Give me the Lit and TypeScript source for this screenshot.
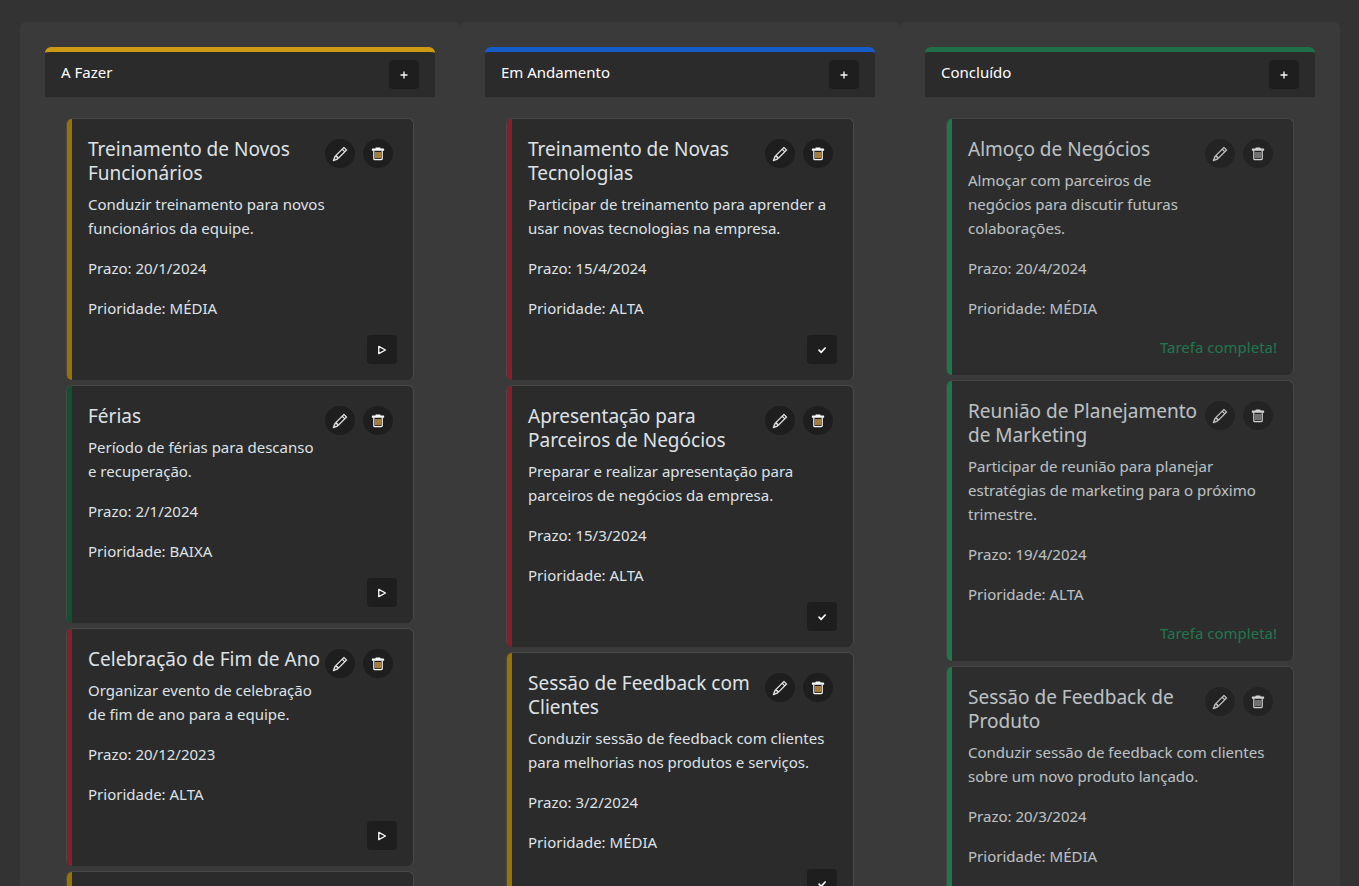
import { LitElement, html, css, svg, nothing } from "lit";
import { customElement, property } from "lit/decorators.js";

type Priority = "ALTA" | "MÉDIA" | "BAIXA";
type Stage = "todo" | "doing" | "done";

interface Task {
  title: string;
  text: string;
  due: string;
  priority: Priority;
}

interface Column {
  stage: Stage;
  name: string;
  tasks: Task[];
  pending?: Priority;
}

const COLUMNS: Column[] = [
  {
    stage: "todo",
    name: "A Fazer",
    tasks: [
      { title: "Treinamento de Novos Funcionários", text: "Conduzir treinamento para novos funcionários da equipe.", due: "20/1/2024", priority: "MÉDIA" },
      { title: "Férias", text: "Período de férias para descanso e recuperação.", due: "2/1/2024", priority: "BAIXA" },
      { title: "Celebração de Fim de Ano", text: "Organizar evento de celebração de fim de ano para a equipe.", due: "20/12/2023", priority: "ALTA" },
    ],
    pending: "MÉDIA",
  },
  {
    stage: "doing",
    name: "Em Andamento",
    tasks: [
      { title: "Treinamento de Novas Tecnologias", text: "Participar de treinamento para aprender a usar novas tecnologias na empresa.", due: "15/4/2024", priority: "ALTA" },
      { title: "Apresentação para Parceiros de Negócios", text: "Preparar e realizar apresentação para parceiros de negócios da empresa.", due: "15/3/2024", priority: "ALTA" },
      { title: "Sessão de Feedback com Clientes", text: "Conduzir sessão de feedback com clientes para melhorias nos produtos e serviços.", due: "3/2/2024", priority: "MÉDIA" },
    ],
  },
  {
    stage: "done",
    name: "Concluído",
    tasks: [
      { title: "Almoço de Negócios", text: "Almoçar com parceiros de negócios para discutir futuras colaborações.", due: "20/4/2024", priority: "MÉDIA" },
      { title: "Reunião de Planejamento de Marketing", text: "Participar de reunião para planejar estratégias de marketing para o próximo trimestre.", due: "19/4/2024", priority: "ALTA" },
      { title: "Sessão de Feedback de Produto", text: "Conduzir sessão de feedback com clientes sobre um novo produto lançado.", due: "20/3/2024", priority: "MÉDIA" },
    ],
  },
];

const GLYPHS = {
  plus: svg`<path d="M8 4v8M4 8h8" stroke="currentColor" stroke-width="1.500" fill="none"/>`,
  play: svg`<path d="M4.300 3.800v8.400L12 8z" stroke="currentColor" stroke-width="1.500" stroke-linejoin="round" fill="none"/>`,
  check: svg`<path d="M4.600 8.200l2.400 2.500 4.600-5" stroke="currentColor" stroke-width="1.900" stroke-linecap="round" stroke-linejoin="round" fill="none"/>`,
  pencil: svg`<path fill="currentColor" stroke="currentColor" stroke-width=".5" d="M12.146.146a.5.5 0 0 1 .708 0l3 3a.5.5 0 0 1 0 .708l-10 10a.5.5 0 0 1-.168.11l-5 2a.5.5 0 0 1-.65-.65l2-5a.5.5 0 0 1 .11-.168zM11.207 2.5 13.5 4.793 14.793 3.5 12.5 1.207zm1.586 3L10.5 3.207 4 9.707V10h.5a.5.5 0 0 1 .5.5v.5h.5a.5.5 0 0 1 .5.5v.5h.293zm-9.761 5.175-.106.106-1.528 3.821 3.821-1.528.106-.106A.5.5 0 0 1 5 12.5V12h-.5a.5.5 0 0 1-.5-.5V11h-.5a.5.5 0 0 1-.468-.325"/>`,
  trash: svg`<path fill="currentColor" d="M5.500.6h5l.5 1h3.400a.6.6 0 0 1 .6.6v1.400a.6.6 0 0 1-.6.6H1.600a.6.6 0 0 1-.6-.6V2.200a.6.6 0 0 1 .6-.6H5z"/><path class="slats" d="M5.700 5.600v7.200M8 5.600v7.200M10.300 5.600v7.200"/><path d="M3.200 4v9.300a1.200 1.200 0 0 0 1.200 1.200h7.200a1.200 1.200 0 0 0 1.200-1.200V4" fill="none" stroke="currentColor" stroke-width="1.400"/>`,
};

const icon = (name: keyof typeof GLYPHS) =>
  html`<svg viewBox="0 0 16 16" width="14" height="14" aria-hidden="true">${GLYPHS[name]}</svg>`;

const buttonStyles = css`
  button {
    display: inline-flex;
    align-items: center;
    justify-content: center;
    width: 30px;
    height: 29px;
    padding: 0;
    border: 0;
    border-radius: 4px;
    background: #1e1e1e;
    color: #f8f9fa;
    cursor: pointer;
  }
  button:hover {
    background: #171717;
  }
  svg {
    display: block;
    overflow: visible;
  }
`;

@customElement("task-card")
export class TaskCard extends LitElement {
  @property({ attribute: false }) task?: Task;
  @property() stage: Stage = "todo";
  @property() priority: Priority = "BAIXA";

  static styles = [
    buttonStyles,
    css`
      :host {
        display: block;
      }
      .card {
        border: 1px solid #494949;
        border-bottom: 0;
        border-radius: 6px;
        background: #2b2b2b;
        color: #dee2e6;
      }
      .body {
        min-height: 24px;
        padding: 16px;
        border-left: 5px solid;
        border-radius: 5px;
      }
      .high {
        border-left-color: #842029;
      }
      .medium {
        border-left-color: #997404;
      }
      .low {
        border-left-color: #0f5132;
      }
      .slats {
        fill: none;
        stroke: #efb04e;
        stroke-width: 1.5px;
      }
      .done {
        opacity: 0.8;
      }
      .done .slats {
        stroke: #b4b4b4;
      }
      .done .body {
        border-left-color: #198754;
      }
      .actions {
        float: right;
        display: flex;
        gap: 8px;
        padding: 4px;
      }
      .actions button {
        border-radius: 50%;
      }
      h2 {
        margin: 0 0 7px;
        padding-top: 2px;
        font-size: 19px;
        font-weight: 400;
        line-height: 24px;
      }
      p {
        margin: 0 0 16px;
      }
      .priority {
        margin-bottom: 15px;
      }
      .foot {
        display: flex;
        justify-content: flex-end;
      }
      .complete {
        color: #198754;
      }
    `,
  ];

  render() {
    const tone = { ALTA: "high", MÉDIA: "medium", BAIXA: "low" }[this.priority];
    const t = this.task;
    return html`<article class="card ${this.stage}">
      <div class="body ${tone}">
        ${t
          ? html`<div class="actions">
                <button type="button" aria-label="Editar">${icon("pencil")}</button>
                <button type="button" aria-label="Excluir">${icon("trash")}</button>
              </div>
              <h2>${t.title}</h2>
              <p>${t.text}</p>
              <p>Prazo: ${t.due}</p>
              <p class="priority">Prioridade: ${t.priority}</p>
              <div class="foot">
                ${this.stage === "done"
                  ? html`<span class="complete">Tarefa completa!</span>`
                  : this.stage === "doing"
                    ? html`<button type="button" aria-label="Concluir">${icon("check")}</button>`
                    : html`<button type="button" aria-label="Iniciar">${icon("play")}</button>`}
              </div>`
          : nothing}
      </div>
    </article>`;
  }
}

@customElement("app-root")
export class AppRoot extends LitElement {
  static styles = [
    buttonStyles,
    css`
      :host {
        display: block;
        box-sizing: border-box;
        height: 100vh;
        overflow-y: auto;
        scrollbar-width: none;
        padding-top: 22px;
        background: #333333;
        color: #ffffff;
        font: 15px/24px "Segoe UI", "Noto Sans", "Open Sans", sans-serif;
      }
      .board {
        display: grid;
        grid-template-columns: repeat(3, minmax(0, 1fr));
        padding: 0 19px 0 20px;
      }
      .column {
        box-sizing: border-box;
        padding: 25px;
        border-radius: 6px;
        background: #3a3a3a;
      }
      .head {
        display: flex;
        justify-content: space-between;
        align-items: flex-start;
        padding: 8px 16px;
        border-top: 5px solid;
        border-radius: 6px 6px 0 0;
        background: #2b2b2b;
      }
      .todo {
        border-top-color: #cc9a12;
      }
      .doing {
        border-top-color: #155cc9;
      }
      .done {
        border-top-color: #1f7048;
      }
      h1 {
        margin: 0;
        font-size: 15px;
        font-weight: 400;
        line-height: 24px;
      }
      .list {
        display: grid;
        gap: 5px;
        padding: 21px;
      }
    `,
  ];

  render() {
    return html`<main class="board">
      ${COLUMNS.map(
        (c) => html`<section class="column">
          <header class="head ${c.stage}">
            <h1>${c.name}</h1>
            <button type="button" aria-label="Adicionar tarefa">${icon("plus")}</button>
          </header>
          <div class="list">
            ${c.tasks.map((t) => html`<task-card .task=${t} .stage=${c.stage} .priority=${t.priority}></task-card>`)}
            ${c.pending ? html`<task-card .stage=${c.stage} .priority=${c.pending}></task-card>` : nothing}
          </div>
        </section>`,
      )}
    </main>`;
  }
}
